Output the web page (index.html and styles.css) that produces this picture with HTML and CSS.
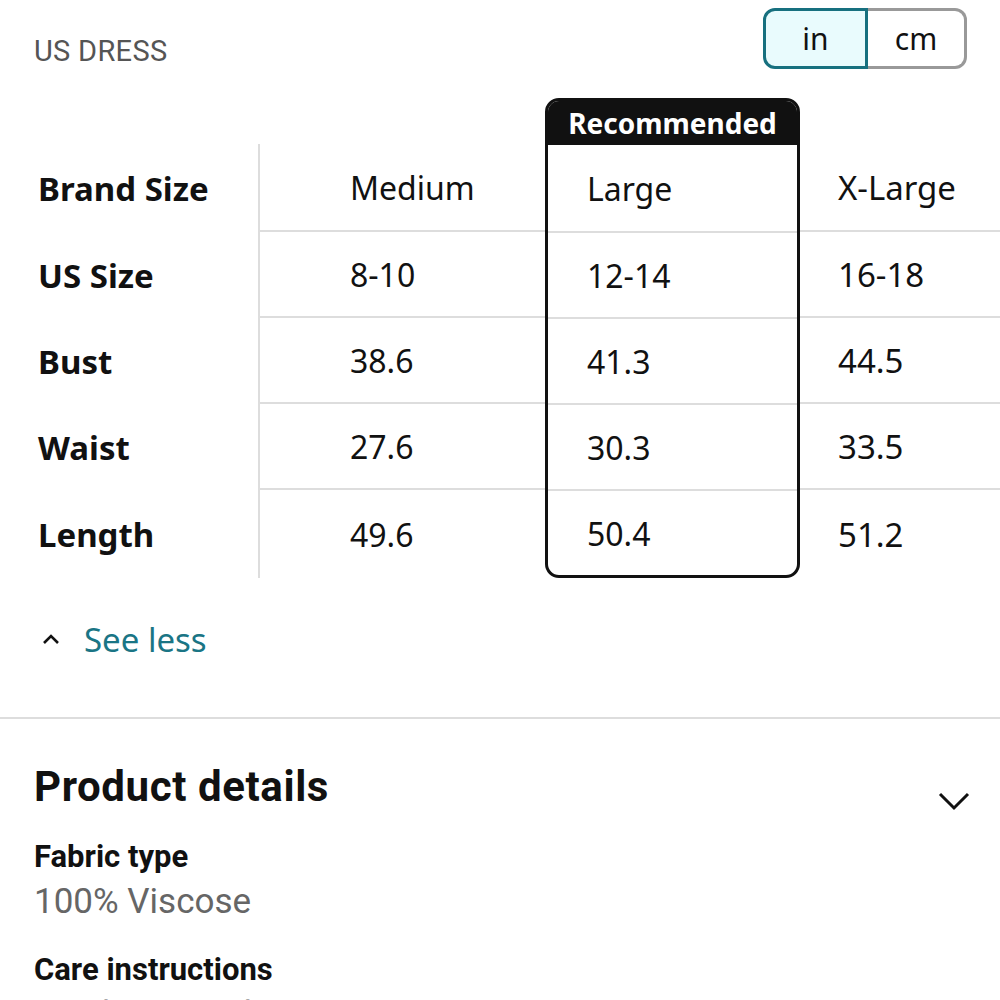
FILE: index.html
```html
<!DOCTYPE html>
<html>
<head>
<meta charset="utf-8">
<link rel="stylesheet" href="styles.css">
</head>
<body>
<div class="page">
  <div class="topbar">
    <div class="chart-title">US DRESS</div>
    <div class="units">
      <div class="unit unit-active">in</div>
      <div class="unit">cm</div>
    </div>
  </div>

  <div class="table">
    <div class="col col-labels">
      <div class="cell">Brand Size</div>
      <div class="cell">US Size</div>
      <div class="cell">Bust</div>
      <div class="cell">Waist</div>
      <div class="cell">Length</div>
    </div>
    <div class="col col-medium">
      <div class="cell">Medium</div>
      <div class="cell">8-10</div>
      <div class="cell">38.6</div>
      <div class="cell">27.6</div>
      <div class="cell">49.6</div>
    </div>
    <div class="col col-rec">
      <div class="rec-head">Recommended</div>
      <div class="cell">Large</div>
      <div class="cell">12-14</div>
      <div class="cell">41.3</div>
      <div class="cell">30.3</div>
      <div class="cell">50.4</div>
    </div>
    <div class="col col-xl">
      <div class="cell">X-Large</div>
      <div class="cell">16-18</div>
      <div class="cell">44.5</div>
      <div class="cell">33.5</div>
      <div class="cell">51.2</div>
    </div>
  </div>

  <div class="see-less">
    <svg class="caret-up" width="20" height="14" viewBox="0 0 20 14"><path d="M3 11 L10 4 L17 11" fill="none" stroke="#111" stroke-width="2.6"/></svg>
    <span>See less</span>
  </div>
</div>

<div class="divider"></div>

<div class="details">
  <div class="details-head">
    <h2>Product details</h2>
    <svg class="chev" width="34" height="22" viewBox="0 0 34 22"><path d="M3 4 L17 18 L31 4" fill="none" stroke="#111" stroke-width="3"/></svg>
  </div>
  <div class="attr">
    <div class="attr-name">Fabric type</div>
    <div class="attr-val">100% Viscose</div>
  </div>
  <div class="attr">
    <div class="attr-name">Care instructions</div>
    <div class="attr-val">Machine Wash</div>
  </div>
</div>
</body>
</html>
```

FILE: styles.css
```css
html, body {
  margin: 0;
  padding: 0;
  background: #fff;
  overflow: hidden;
}
body {
  font-family: "Noto Sans", "Open Sans", sans-serif;
  color: #111;
  width: 1000px;
  height: 1000px;
}
.page {
  padding: 8px 0 0 0;
}
.topbar {
  display: flex;
  justify-content: space-between;
  align-items: flex-start;
  padding: 0 33px 0 34px;
}
.chart-title {
  font-family: "Roboto", sans-serif;
  font-size: 29px;
  color: #555;
  margin-top: 26px;
  letter-spacing: 0.3px;
}
.units {
  display: flex;
}
.unit {
  width: 96px;
  height: 55px;
  display: flex;
  align-items: center;
  justify-content: center;
  font-size: 30px;
  border: 3px solid #999;
  color: #111;
}
.unit-active {
  width: 99px;
  border-color: #17707f;
  background: #e9fbfd;
  border-radius: 12px 0 0 12px;
}
.unit:last-child {
  border-left: none;
  border-radius: 0 12px 12px 0;
}
.table {
  display: flex;
  align-items: flex-end;
  margin-top: 29px;
}
.col {
  display: flex;
  flex-direction: column;
}
.cell {
  height: 84px;
  border-bottom: 2px solid #ddd;
  display: flex;
  align-items: center;
  font-size: 32px;
}
.cell:first-child {
  height: 86px;
}
.cell:last-child {
  border-bottom: none;
  height: 88px;
}
.col-labels {
  width: 220px;
  padding-left: 38px;
  border-right: 2px solid #ddd;
}
.col-labels .cell {
  border-bottom: none;
  height: 86px;
  font-weight: 700;
  font-size: 33px;
}
.col-labels .cell:first-child {
  height: 88px;
}
.col-labels .cell:last-child {
  height: 88px;
}
.col-medium {
  width: 285px;
}
.col-medium .cell {
  padding-left: 90px;
}
.col-rec {
  width: 249px;
  border: 3px solid #111;
  border-radius: 14px;
  overflow: hidden;
}
.col-rec .cell {
  padding-left: 39px;
}
.col-rec .cell:nth-child(2) {
  height: 86px;
}
.col-rec .cell:last-child {
  height: 84px;
}
.rec-head {
  height: 44px;
  background: #111;
  color: #fff;
  font-weight: 700;
  font-size: 28px;
  display: flex;
  align-items: center;
  justify-content: center;
  padding-top: 0;
}
.col-xl {
  flex: 1;
}
.col-xl .cell {
  padding-left: 38px;
  font-size: 33px;
}
.see-less {
  display: flex;
  align-items: center;
  padding-left: 41px;
  margin-top: 37px;
  height: 48px;
}
.caret-up {
  margin-right: 23px;
}
.see-less span {
  color: #1a7585;
  font-size: 33px;
}
.divider {
  height: 2px;
  background: #ddd;
  margin-top: 54px;
}
.details {
  padding: 0 34px;
}
.details-head {
  display: flex;
  justify-content: space-between;
  align-items: center;
  margin-top: 41px;
}
.details-head h2 {
  margin: 0;
  font-family: "Roboto", sans-serif;
  font-size: 42px;
  font-weight: 700;
  color: #111;
  letter-spacing: 0.6px;
}
.chev {
  margin-top: 30px;
  margin-right: -5px;
}
.attr {
  margin-top: 29px;
}
.details-head + .attr {
  margin-top: 26px;
}
.attr-name {
  font-family: "Roboto", sans-serif;
  font-weight: 700;
  font-size: 31px;
  color: #111;
}
.attr-val {
  font-family: "Roboto", sans-serif;
  font-size: 35px;
  color: #666;
  margin-top: 6px;
}
```
